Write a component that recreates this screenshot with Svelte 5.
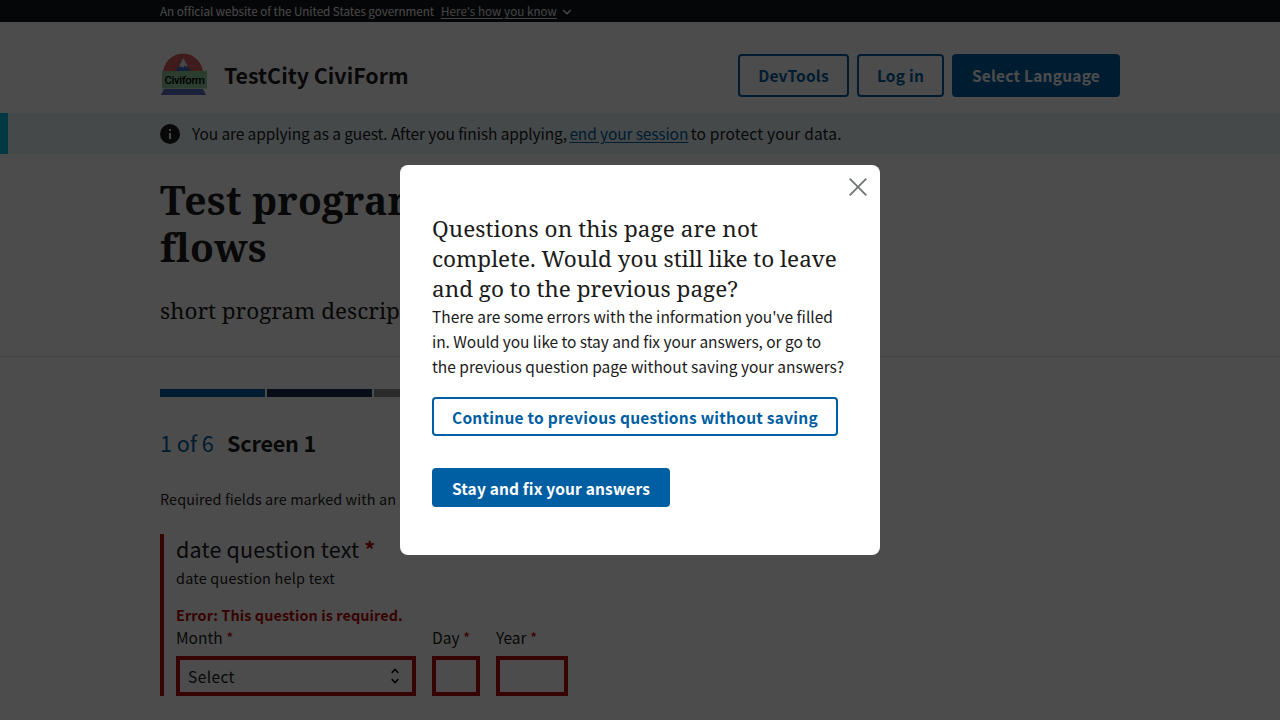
<script>
  const months = ['Select', 'January', 'February', 'March'];
  const segments = ['current', 'complete', '', '', '', ''];
</script>

<div class="page">
  <div class="gov"><div class="wrap gov-row">
    <span class="gov-text">An official website of the United States government</span>
    <a class="know" href="#know">Here's how you know</a>
    <svg class="chev" width="10" height="8" viewBox="0 0 10 8"><path d="M1.2 2 5 5.8 8.8 2" fill="none" stroke="#f0f0f0" stroke-width="1.4" /></svg>
  </div></div>

  <header class="wrap head">
    <svg class="logo" width="48" height="48" viewBox="0 0 48 48">
      <path d="M3 24a20 20.500 0 0 1 40 0z" fill="#d65a5a" />
      <path d="M15 22 23 8l8.500 14z" fill="#4767b8" />
      <path d="M19.300 15.500 23.200 8l4.600 8-1.800 1-1-2-2 3-1.500-2-1.200 1.300z" fill="#f0f0f0" />
      <g fill="#f3b5b5"><circle cx="11" cy="15" r=".6" /><circle cx="16" cy="10" r=".6" /><circle cx="32" cy="10" r=".6" /><circle cx="35" cy="16" r=".6" /><circle cx="30" cy="15" r=".6" /><circle cx="8" cy="19" r=".5" /><circle cx="38" cy="20" r=".5" /></g>
      <rect x="2" y="21" width="45" height="17.500" fill="#8ccb9c" />
      <path d="M4 39h39l3 6H1z" fill="#5a6fc0" />
      <text x="4.400" y="34" font-family="Roboto" font-size="11.300" font-weight="500" textLength="40.500" fill="#000">Civiform</text>
    </svg>
    <span class="brand">TestCity CiviForm</span>
    <div class="actions">
      <button class="btn dev">DevTools</button>
      <button class="btn login">Log in</button>
      <button class="btn solid lang">Select Language</button>
    </div>
  </header>

  <div class="alert"><div class="alert-body">
    <svg width="20" height="20" viewBox="0 0 20 20"><circle cx="10" cy="10" r="10" fill="#1b1b1b" /><path d="M9 5h2v2H9zM9 9h2v6H9z" fill="#e7f6f8" /></svg>
    <p><span class="a1">You are applying as a guest. After you finish applying,</span> <a href="#end">end your session</a> <span class="a2">to protect your data.</span></p>
  </div></div>

  <section class="intro"><div class="wrap">
    <h1>Test program<br />flows</h1>
    <p>short program description</p>
  </div></section>

  <main class="wrap">
    <div class="steps">{#each segments as s}<i class={s}></i>{/each}</div>
    <h2><span class="count">1 of 6</span><span class="screen">Screen 1</span></h2>
    <p class="required">Required fields are marked with an asterisk <b class="star">*</b></p>
    <fieldset>
      <legend>date question text <b class="star">*</b></legend>
      <p class="help">date question help text</p>
      <p class="error">Error: This question is required.</p>
      <div class="date">
        <label class="month"><span>Month <em>*</em></span>
          <div class="input select">{months[0]}
            <svg width="10" height="16" viewBox="0 0 10 16"><path d="M1.700 4.800 5 1.500l3.300 3.300M1.700 11.200 5 14.500l3.300-3.300" fill="none" stroke="#1b1b1b" stroke-width="1.700" /></svg>
          </div></label>
        <label class="day"><span>Day <em>*</em></span><div class="input"></div></label>
        <label class="year"><span>Year <em>*</em></span><div class="input"></div></label>
      </div>
    </fieldset>
  </main>
</div>

<div class="overlay">
  <div class="modal" role="dialog" aria-modal="true">
    <button class="close" aria-label="Close"><svg width="18" height="18" viewBox="0 0 18 18"><path d="M.7.7l16.600 16.600M17.300.7.7 17.300" stroke="#71767a" stroke-width="1.900" /></svg></button>
    <h3><span class="h1l">Questions on this page are not</span> <span class="h2l">complete. Would you still like to leave</span> <span class="h3l">and go to the previous page?</span></h3>
    <p><span>There are some errors with the information you've filled</span> <span class="p2">in. Would you like to stay and fix your answers, or go to</span> <span>the previous question page without saving your answers?</span></p>
    <button class="btn cont">Continue to previous questions without saving</button>
    <button class="btn solid stay">Stay and fix your answers</button>
  </div>
</div>

<style>
  :global(body) { background: #fff; overflow: hidden; }
  * { box-sizing: border-box; }
  h1, h2, h3, p, fieldset, legend { margin: 0; padding: 0; border: 0; font-weight: 400; }
  .page { height: 720px; overflow: hidden; color: #1b1b1b; font: 15.5px/25px "Noto Sans CJK SC", sans-serif; }
  .page, .modal { white-space: nowrap; }
  .wrap { width: 960px; margin: 0 auto; }
  .gov { height: 22px; background: #13171a; color: #f0f0f0; font-size: 11.6px; line-height: 22px; }
  .gov-row { display: flex; align-items: center; }
  .gov-text { width: 281px; letter-spacing: -.02px; }
  .know { width: 116px; color: #dfe1e2; letter-spacing: .05px; text-underline-offset: 2px; }
  .chev { margin-left: 5px; margin-top: 2px; }
  .head { height: 91px; display: flex; align-items: center; padding-top: 15px; }
  .logo { margin-top: -2px; }
  .brand { margin-left: 16px; font-size: 21.4px; font-weight: 700; line-height: 30px; }
  .actions { margin-left: auto; display: flex; gap: 8px; }
  .btn { height: 39px; margin: 0; padding: 0; border: 2px solid #005ea2; border-radius: 4px; background: transparent; color: #005ea2; font: 700 15.5px/20px "Noto Sans CJK SC", sans-serif; letter-spacing: .22px; text-align: center; display: block; }
  .btn.solid { background: #005ea2; color: #fff; }
  .actions .btn { height: 43px; }
  .dev { width: 111px; }
  .login { width: 87px; }
  .lang { width: 168px; }
  .alert { height: 41px; background: #e7f6f8; border-left: 8px solid #00bde3; padding-left: 152px; }
  .alert-body { display: flex; height: 41px; align-items: center; gap: 12px; }
  .a1 { letter-spacing: -.1px; }
  .alert a { color: #005ea2; letter-spacing: -.13px; text-underline-offset: 2px; margin-left: -1px; }
  .a2 { letter-spacing: .18px; margin-left: -1px; }
  .intro { height: 203px; border-bottom: 1px solid #dcdee0; padding-top: 22px; font-family: "Noto Serif", serif; }
  .intro h1 { font-size: 39px; line-height: 47px; font-weight: 700; letter-spacing: .2px; }
  .intro p { margin-top: 26px; font-size: 22.5px; line-height: 30px; }
  .steps { width: 640px; height: 8px; margin-top: 32px; display: flex; gap: 2px; }
  .steps i { flex: 1; background: #919191; }
  .steps .current { background: #005ea2; }
  .steps .complete { background: #162e51; }
  h2 { margin-top: 31px; font-size: 21.6px; line-height: 30px; display: flex; }
  .count { width: 67px; color: #005ea2; }
  .screen { font-weight: 700; letter-spacing: -.2px; }
  .required { margin-top: 29px; font-size: 14.4px; line-height: 24px; letter-spacing: .09px; }
  fieldset { margin-top: 23px; height: 162px; border-left: 4px solid #b50909; padding-left: 12px; }
  legend { float: left; width: 100%; font-size: 21.5px; line-height: 30px; letter-spacing: .17px; }
  .star, em { color: #b50909; font-style: normal; }
  .help { clear: both; font-size: 14.4px; line-height: 24px; letter-spacing: .23px; padding-top: 2px; }
  .error { margin-top: 13px; color: #b50909; font-size: 14.4px; font-weight: 700; line-height: 24px; letter-spacing: .1px; }
  .date { display: flex; gap: 16px; }
  label { display: block; }
  label span { display: block; height: 29px; line-height: 20px; }
  .month { width: 240px; }
  .day { width: 48px; }
  .year { width: 72px; }
  .input { height: 40px; border: 4px solid #b50909; padding: 0 12px 0 8px; line-height: 32px; }
  .select { display: flex; justify-content: space-between; align-items: center; letter-spacing: .4px; }
  .overlay { position: absolute; inset: 0; background: rgba(0, 0, 0, .7); display: flex; align-items: center; justify-content: center; }
  .modal { position: relative; width: 480px; height: 390px; border-radius: 8px; background: #fff; padding: 49px 32px 0; color: #1b1b1b; font: 15.5px/25px "Noto Sans CJK SC", sans-serif; }
  .close { position: absolute; right: 13px; top: 13px; width: 18px; height: 18px; padding: 0; border: 0; background: none; }
  .close svg { display: block; }
  .modal h3 { font: 400 22.5px/30px "Noto Serif", serif; }
  .modal h3 span, .modal p span { display: block; }
  .h1l { letter-spacing: .08px; }
  .p2 { letter-spacing: -.06px; }
  .cont { width: 406px; margin-top: 18px; letter-spacing: .25px; }
  .stay { width: 238px; margin-top: 32px; letter-spacing: .16px; }
</style>
